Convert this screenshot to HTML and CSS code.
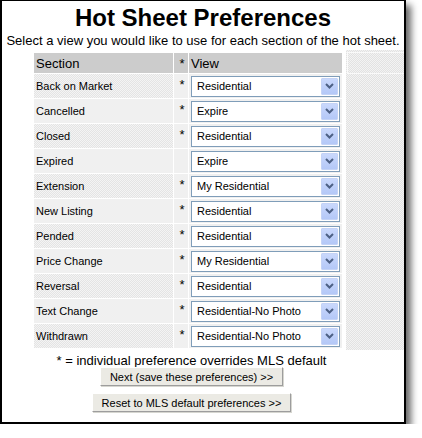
FILE: index.html
```html
<!DOCTYPE html>
<html lang="en">
<head>
    <meta charset="UTF-8">
    <title>Hot Sheet Preferences</title>
    <link rel="stylesheet" href="styles.css">
</head>
<body>

    <div class="window">
        <h1>Hot Sheet Preferences</h1>
        <p class="intro">Select a view you would like to use for each section of the hot sheet.</p>

        <div class="layout">
            <div class="main">
                <table class="prefs">
                    <tr class="head">
                        <th class="col-section">Section</th>
                        <th class="col-star">*</th>
                        <th class="col-view">View</th>
                    </tr>
                    <tr class="odd">
                        <td>Back on Market</td><td class="star">*</td>
                        <td><div class="select"><span>Residential</span><span class="drop"><svg width="9" height="6" viewBox="0 0 9 6"><path d="M1 1l3.5 3.5L8 1" fill="none" stroke="#4d6185" stroke-width="2"/></svg></span></div></td>
                    </tr>
                    <tr>
                        <td>Cancelled</td><td class="star">*</td>
                        <td><div class="select"><span>Expire</span><span class="drop"><svg width="9" height="6" viewBox="0 0 9 6"><path d="M1 1l3.5 3.5L8 1" fill="none" stroke="#4d6185" stroke-width="2"/></svg></span></div></td>
                    </tr>
                    <tr class="odd">
                        <td>Closed</td><td class="star">*</td>
                        <td><div class="select"><span>Residential</span><span class="drop"><svg width="9" height="6" viewBox="0 0 9 6"><path d="M1 1l3.5 3.5L8 1" fill="none" stroke="#4d6185" stroke-width="2"/></svg></span></div></td>
                    </tr>
                    <tr>
                        <td>Expired</td><td class="star"></td>
                        <td><div class="select"><span>Expire</span><span class="drop"><svg width="9" height="6" viewBox="0 0 9 6"><path d="M1 1l3.5 3.5L8 1" fill="none" stroke="#4d6185" stroke-width="2"/></svg></span></div></td>
                    </tr>
                    <tr class="odd">
                        <td>Extension</td><td class="star">*</td>
                        <td><div class="select"><span>My Residential</span><span class="drop"><svg width="9" height="6" viewBox="0 0 9 6"><path d="M1 1l3.5 3.5L8 1" fill="none" stroke="#4d6185" stroke-width="2"/></svg></span></div></td>
                    </tr>
                    <tr>
                        <td>New Listing</td><td class="star">*</td>
                        <td><div class="select"><span>Residential</span><span class="drop"><svg width="9" height="6" viewBox="0 0 9 6"><path d="M1 1l3.5 3.5L8 1" fill="none" stroke="#4d6185" stroke-width="2"/></svg></span></div></td>
                    </tr>
                    <tr class="odd">
                        <td>Pended</td><td class="star">*</td>
                        <td><div class="select"><span>Residential</span><span class="drop"><svg width="9" height="6" viewBox="0 0 9 6"><path d="M1 1l3.5 3.5L8 1" fill="none" stroke="#4d6185" stroke-width="2"/></svg></span></div></td>
                    </tr>
                    <tr>
                        <td>Price Change</td><td class="star">*</td>
                        <td><div class="select"><span>My Residential</span><span class="drop"><svg width="9" height="6" viewBox="0 0 9 6"><path d="M1 1l3.5 3.5L8 1" fill="none" stroke="#4d6185" stroke-width="2"/></svg></span></div></td>
                    </tr>
                    <tr class="odd">
                        <td>Reversal</td><td class="star">*</td>
                        <td><div class="select"><span>Residential</span><span class="drop"><svg width="9" height="6" viewBox="0 0 9 6"><path d="M1 1l3.5 3.5L8 1" fill="none" stroke="#4d6185" stroke-width="2"/></svg></span></div></td>
                    </tr>
                    <tr>
                        <td>Text Change</td><td class="star">*</td>
                        <td><div class="select"><span>Residential-No Photo</span><span class="drop"><svg width="9" height="6" viewBox="0 0 9 6"><path d="M1 1l3.5 3.5L8 1" fill="none" stroke="#4d6185" stroke-width="2"/></svg></span></div></td>
                    </tr>
                    <tr class="odd">
                        <td>Withdrawn</td><td class="star">*</td>
                        <td><div class="select"><span>Residential-No Photo</span><span class="drop"><svg width="9" height="6" viewBox="0 0 9 6"><path d="M1 1l3.5 3.5L8 1" fill="none" stroke="#4d6185" stroke-width="2"/></svg></span></div></td>
                    </tr>
                </table>

                <p class="note">* = individual preference overrides MLS default</p>

                <div class="actions">
                    <button type="button">Next (save these preferences) &gt;&gt;</button>
                    <button type="button">Reset to MLS default preferences &gt;&gt;</button>
                </div>
            </div>

            <div class="side">
                <div class="side-top"></div>
            </div>
        </div>
    </div>

</body>
</html>
```

FILE: styles.css
```css
body {
    margin: 0;
    background-color: #fff;
    font-family: "Liberation Sans", Arial, sans-serif;
    color: #000;
}
.window {
    width: 402px;
    height: 421px;
    border: 2px solid #000;
    border-top-width: 1px;
    background-color: #fff;
    box-shadow: 5px 5px 7px rgba(0, 0, 0, 0.6);
}
h1 {
    margin: 3px 0 0;
    font-size: 24px;
    line-height: 28px;
    text-align: center;
}
.intro {
    margin: 1px 0 0;
    font-size: 13px;
    line-height: 15px;
    text-align: center;
}
.layout {
    display: flex;
    align-items: flex-start;
    margin-top: 2px;
}
.main {
    width: 313px;
    padding-left: 31px;
    padding-top: 2px;
}
.side {
    flex: 1;
    height: 298px;
    padding: 2px 0 0 1px;
    background-color: #ececec;
    background-image: repeating-conic-gradient(#e2e2e2 0 25%, #f3f3f3 0 50%);
    background-size: 2px 2px;
}
.side-top {
    height: 20px;
    border: 1px solid #fafafa;
    border-right: none;
}

/* preference table */
.prefs {
    border-spacing: 1px;
    font-size: 11px;
}
.prefs th {
    height: 20px;
    padding: 0 0 0 2px;
    background-color: #cccccc;
    font-size: 13px;
    font-weight: normal;
    text-align: left;
}
.prefs th.col-section {
    width: 137px;
}
.prefs th.col-star {
    width: 12px;
    padding-left: 2px;
    text-align: center;
}
.prefs th.col-view {
    width: 151px;
}
.prefs td {
    height: 24px;
    padding: 0 0 0 2px;
    background-color: #f0f0f0;
    vertical-align: middle;
}
.prefs tr.odd td:first-child {
    background-image: repeating-conic-gradient(#e4e4e4 0 25%, #f4f4f4 0 50%);
    background-size: 2px 2px;
}
.prefs td.star {
    text-align: center;
    font-size: 13px;
    vertical-align: top;
    padding-top: 3px;
    height: 21px;
}

/* fake xp style select */
.select {
    display: flex;
    align-items: center;
    justify-content: space-between;
    height: 19px;
    border: 1px solid #7f9db9;
    background-color: #fff;
    padding-left: 5px;
    width: 142px;
}
.select .drop {
    display: flex;
    align-items: center;
    justify-content: center;
    width: 15px;
    height: 15px;
    margin-right: 1px;
    border: 1px solid #c4d3f6;
    border-radius: 1px;
    background: linear-gradient(#c9d8fc, #b4c8f7);
}

.note {
    margin: 4px 0 0;
    padding-left: 4px;
    font-size: 13px;
    line-height: 15px;
    text-align: center;
}
.actions {
    display: flex;
    flex-direction: column;
    align-items: center;
    gap: 7px;
    padding-left: 4px;
    margin-top: -1px;
}
.actions button {
    height: 19px;
    padding: 0 9px;
    border: 1px solid;
    border-color: #fff #9d9d9d #9d9d9d #fff;
    background-color: #ebeae4;
    font-family: "Liberation Sans", Arial, sans-serif;
    font-size: 11px;
    color: #000;
    box-shadow: 1px 1px 0 #d6d6d0;
}
```
